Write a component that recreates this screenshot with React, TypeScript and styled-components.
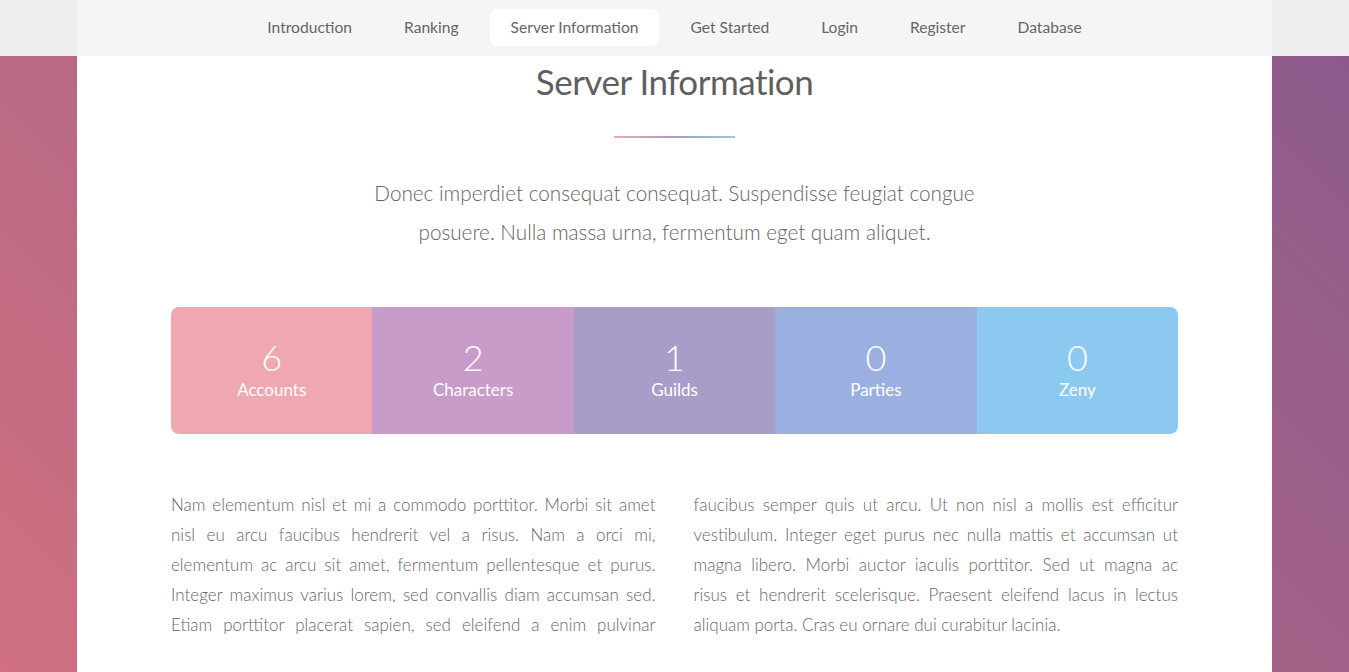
import React from 'react'
import styled, { createGlobalStyle } from 'styled-components'

const GlobalStyle = createGlobalStyle`
  html, body {
    margin: 0;
    padding: 0;
  }
  body {
    font-family: Lato, "Liberation Sans", sans-serif;
    font-weight: 300;
    color: #636363;
    background: linear-gradient(45deg, #d07080 0%, #8a5a8c 100%) fixed;
    min-height: 100vh;
    overflow: hidden;
  }
`

const navItems = ['Introduction', 'Ranking', 'Server Information', 'Get Started', 'Login', 'Register', 'Database']

const stats = [
  { value: '6', label: 'Accounts', color: '#efa8b0' },
  { value: '2', label: 'Characters', color: '#c79cc8' },
  { value: '1', label: 'Guilds', color: '#a89cc8' },
  { value: '0', label: 'Parties', color: '#9bb0e0' },
  { value: '0', label: 'Zeny', color: '#8cc9f0' },
]

const leftLines = [
  'Nam elementum nisl et mi a commodo porttitor. Morbi sit amet',
  'nisl eu arcu faucibus hendrerit vel a risus. Nam a orci mi,',
  'elementum ac arcu sit amet, fermentum pellentesque et purus.',
  'Integer maximus varius lorem, sed convallis diam accumsan sed.',
  'Etiam porttitor placerat sapien, sed eleifend a enim pulvinar',
]

const rightLines = [
  'faucibus semper quis ut arcu. Ut non nisl a mollis est efficitur',
  'vestibulum. Integer eget purus nec nulla mattis et accumsan ut',
  'magna libero. Morbi auctor iaculis porttitor. Sed ut magna ac',
  'risus et hendrerit scelerisque. Praesent eleifend lacus in lectus',
  'aliquam porta. Cras eu ornare dui curabitur lacinia.',
]

const TopStrip = styled.header`
  background: #f0eef0;
  height: 56px;
  display: flex;
  justify-content: center;
`

const Nav = styled.nav`
  width: 1195px;
  background: #f5f5f5;
  display: flex;
  justify-content: center;
  align-items: flex-start;
  padding-top: 9px;
  box-sizing: border-box;
  gap: 10px;
`

const NavLink = styled.a<{ $active?: boolean }>`
  display: block;
  padding: 0 21px;
  height: 37px;
  line-height: 37px;
  border-radius: 8px;
  font-size: 15.6px;
  font-weight: 400;
  color: #666;
  text-decoration: none;
  background: ${p => (p.$active ? '#ffffff' : 'transparent')};
`

const Wrapper = styled.main`
  width: 1195px;
  margin: 0 auto;
  background: #fff;
  padding: 2px 94px 40px;
  box-sizing: border-box;
  min-height: 700px;
`

const Major = styled.header`
  display: flex;
  flex-direction: column;
  align-items: center;
  text-align: center;
`

const Title = styled.h2`
  margin: 0;
  font-size: 35px;
  letter-spacing: -0.5px;
  line-height: 46px;
  font-weight: 400;
  color: #5f5f5f;
`

const Divider = styled.div`
  width: 121px;
  height: 2px;
  margin-top: 32px;
  background: linear-gradient(90deg, #efa8b0, #a89cc8, #8cc9f0);
`

const Lead = styled.p`
  margin: 36px 0 0;
  width: 620px;
  font-size: 20.7px;
  line-height: 39px;
  color: #636363;
`

const Stats = styled.ul`
  list-style: none;
  display: flex;
  margin: 55px 0 0;
  padding: 0;
  height: 127px;
  border-radius: 8px;
  overflow: hidden;
`

const Stat = styled.li<{ $color: string }>`
  flex: 1;
  background: ${p => p.$color};
  color: #fff;
  display: flex;
  flex-direction: column;
  align-items: center;
  justify-content: center;
`

const StatValue = styled.strong`
  font-size: 36px;
  line-height: 34px;
  font-weight: 300;
`

const StatLabel = styled.span`
  margin-top: 4px;
  font-size: 17px;
  line-height: 24px;
  font-weight: 400;
`

const Columns = styled.section`
  display: grid;
  grid-template-columns: 1fr 1fr;
  column-gap: 38px;
  margin-top: 56px;
`

const Column = styled.p`
  margin: 0;
  font-size: 17px;
  line-height: 30px;
  color: #666;
`

const Line = styled.span<{ $last?: boolean }>`
  display: block;
  text-align: justify;
  text-align-last: ${p => (p.$last ? 'left' : 'justify')};
`

export default function App() {
  return (
    <>
      <GlobalStyle />
      <TopStrip>
        <Nav>
          {navItems.map(item => (
            <NavLink key={item} $active={item === 'Server Information'}>
              {item}
            </NavLink>
          ))}
        </Nav>
      </TopStrip>
      <Wrapper>
        <Major>
          <Title>Server Information</Title>
          <Divider />
          <Lead>
            Donec imperdiet consequat consequat. Suspendisse feugiat congue posuere. Nulla massa urna,
            fermentum eget quam aliquet.
          </Lead>
        </Major>
        <Stats>
          {stats.map(s => (
            <Stat key={s.label} $color={s.color}>
              <StatValue>{s.value}</StatValue>
              <StatLabel>{s.label}</StatLabel>
            </Stat>
          ))}
        </Stats>
        <Columns>
          <Column>
            {leftLines.map(l => (
              <Line key={l}>{l}</Line>
            ))}
          </Column>
          <Column>
            {rightLines.map((l, i) => (
              <Line key={l} $last={i === rightLines.length - 1}>
                {l}
              </Line>
            ))}
          </Column>
        </Columns>
      </Wrapper>
    </>
  )
}
